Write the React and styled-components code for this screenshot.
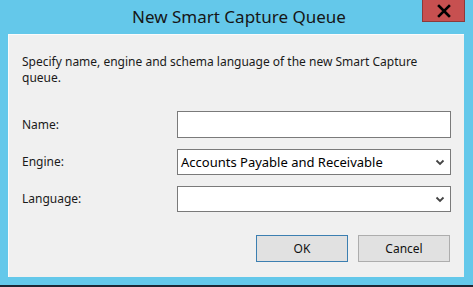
import React from 'react'
import styled, { createGlobalStyle } from 'styled-components'

const GlobalStyle = createGlobalStyle`
  html, body {
    margin: 0;
    padding: 0;
    background: #1e2633;
  }
  body {
    font-family: "Noto Sans", "Open Sans", "DejaVu Sans", sans-serif;
  }
`

const Chevron = () => (
  <svg width="10" height="7" viewBox="0 0 10 7">
    <path d="M1.5 1.5 L5 5 L8.5 1.5" fill="none" stroke="#444" strokeWidth="1.8" />
  </svg>
)

const App = () => {
  return (
    <>
      <GlobalStyle />
      <Frame>
        <TitleBar>
          <Title>New Smart Capture Queue</Title>
          <CloseButton aria-label="Close">
            <svg width="16" height="14" viewBox="0 0 16 14">
              <path d="M3 2 L13 12 M13 2 L3 12" stroke="#000" strokeWidth="2.6" strokeLinecap="square" />
            </svg>
          </CloseButton>
        </TitleBar>
        <Client>
          <Description>
            Specify name, engine and schema language of the new Smart Capture queue.
          </Description>
          <Form>
            <Label>Name:</Label>
            <TextBox $h={27} />
            <Label>Engine:</Label>
            <Combo $h={26}>
              <span>Accounts Payable and Receivable</span>
              <Chevron />
            </Combo>
            <Label>Language:</Label>
            <Combo $h={26}>
              <span />
              <Chevron />
            </Combo>
          </Form>
          <Buttons>
            <Button $default>OK</Button>
            <Button>Cancel</Button>
          </Buttons>
        </Client>
      </Frame>
    </>
  )
}

export default App

const Frame = styled.div`
  width: 473px;
  height: 285px;
  background: #64c8ea;
  display: flex;
  flex-direction: column;
  box-sizing: border-box;
  padding: 0 9px 8px 8px;
`
const TitleBar = styled.div`
  height: 34px;
  position: relative;
  display: flex;
  align-items: center;
  justify-content: center;
`
const Title = styled.div`
  font-size: 17px;
  color: #161616;
  margin-top: -2px;
  margin-left: 6px;
`
const CloseButton = styled.div`
  position: absolute;
  top: 0;
  right: -1px;
  width: 41px;
  height: 21px;
  background: #c75050;
  border: 1px solid #8c3a3a;
  border-top: none;
  display: flex;
  align-items: center;
  justify-content: center;
`
const Client = styled.div`
  flex: 1;
  background: #f0f0f0;
  border-top: 1px solid #fbfbfb;
  border-left: 1px solid #fbfbfb;
  box-sizing: border-box;
  padding: 19px 13px 0 13px;
  display: flex;
  flex-direction: column;
  color: #1a1a1a;
  font-size: 12px;
`
const Description = styled.div`
  line-height: 16px;
  width: 430px;
`
const Form = styled.div`
  display: grid;
  grid-template-columns: 155px 274px;
  row-gap: 11px;
  align-items: center;
  margin-top: 25px;
`
const Label = styled.div`
  line-height: 16px;
`
const TextBox = styled.div`
  height: ${p => p.$h}px;
  box-sizing: border-box;
  background: #fff;
  border: 1px solid #7a7a7a;
`
const Combo = styled.div`
  height: ${p => p.$h}px;
  box-sizing: border-box;
  background: #fff;
  border: 1px solid #7a7a7a;
  display: flex;
  align-items: center;
  justify-content: space-between;
  padding: 0 5px 0 3px;
  color: #000;
  font-size: 13px;
`
const Buttons = styled.div`
  display: flex;
  justify-content: flex-end;
  gap: 10px;
  margin-top: 23px;
  padding-right: 1px;
`
const Button = styled.div`
  width: 92px;
  height: 27px;
  box-sizing: border-box;
  background: #e1e1e1;
  border: 1px solid ${p => (p.$default ? '#3c7fb1' : '#adadad')};
  display: flex;
  align-items: center;
  justify-content: center;
  color: #111;
`
